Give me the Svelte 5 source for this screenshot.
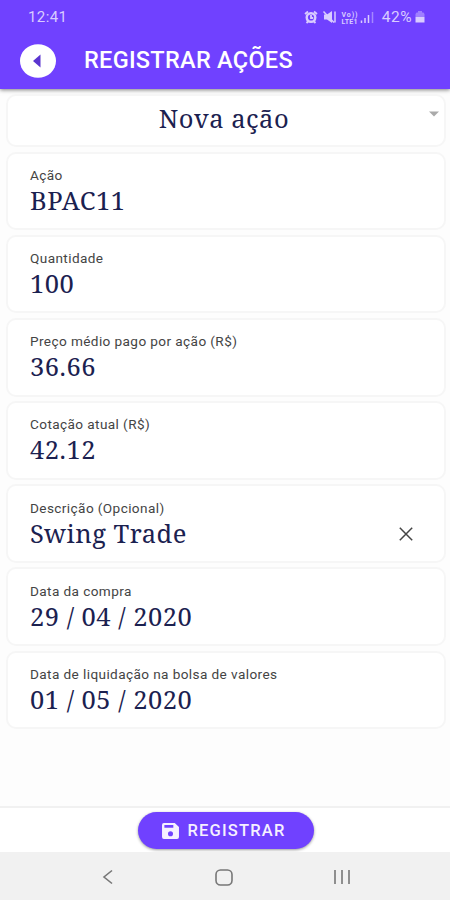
<script>
    let acao = "BPAC11";
    let quantidade = "100";
    let precoMedio = "36.66";
    let cotacao = "42.12";
    let descricao = "Swing Trade";
    let dataCompra = "29 / 04 / 2020";
    let dataLiquidacao = "01 / 05 / 2020";

    function limparDescricao() {
        descricao = "";
    }

    $: campos = [
        { label: "Ação", valor: acao },
        { label: "Quantidade", valor: quantidade },
        { label: "Preço médio pago por ação (R$)", valor: precoMedio },
        { label: "Cotação atual (R$)", valor: cotacao },
        { label: "Descrição (Opcional)", valor: descricao, limpar: limparDescricao },
        { label: "Data da compra", valor: dataCompra },
        { label: "Data de liquidação na bolsa de valores", valor: dataLiquidacao }
    ];
</script>

<div class="screen">
    <header>
        <div class="status">
            <span class="clock">12:41</span>
            <svg class="status-icons" width="70" height="14" viewBox="0 0 70 14">
                <!-- alarme -->
                <circle cx="7" cy="7.500" r="4.300" fill="none" stroke="currentColor" stroke-width="2.400" />
                <path d="M1 4 4 1.500M10 1.500 13 4M2.500 13l2-2M11.500 13l-2-2M7 5v3h2.200" fill="none" stroke="currentColor" stroke-width="1.800" />
                <!-- som desligado -->
                <path d="M20 4.500h3L28 1v12L23 9.500h-3z" fill="currentColor" />
                <path d="M19.500 1.500 30 12.500M31 1.500v11" fill="none" stroke="currentColor" stroke-width="1.500" />
                <!-- sinal -->
                <text x="37.500" y="6.500" textLength="16">Vo))</text>
                <text x="37.500" y="13.500" textLength="16">LTE1</text>
                <path d="M57.500 10.500V13M61 8v5M64.500 5V13" stroke="currentColor" stroke-width="1.500" />
                <path d="M68.500 2V13" stroke="currentColor" stroke-width="1.500" opacity=".5" />
            </svg>
            <span class="percent">42%</span>
            <svg class="battery" width="10" height="12" viewBox="0 0 10 12">
                <path d="M3 0h4v1.500h1.500L9.500 3v3h-9V3l1-1.500H3z" fill="currentColor" opacity=".45" />
                <path d="M.5 6h9v5.500h-9z" fill="currentColor" />
            </svg>
        </div>
        <div class="toolbar">
            <button class="back" aria-label="Voltar">
                <svg width="36" height="34" viewBox="0 0 36 34">
                    <ellipse cx="18" cy="17" rx="18" ry="16.800" fill="#fff" />
                    <path d="M13 17 20.500 10.500v13z" fill="#5b35d0" />
                </svg>
            </button>
            <h1>REGISTRAR AÇÕES</h1>
        </div>
    </header>

    <main>
        <div class="card select">
            <span>Nova ação</span>
            <svg class="caret" width="10" height="6" viewBox="0 0 10 6">
                <path d="M0 .5h10L5 5.500z" fill="#aaa" />
            </svg>
        </div>
        {#each campos as campo}
            <div class="card field">
                <div class="text">
                    <div class="label">{campo.label}</div>
                    <div class="value">{campo.valor}</div>
                </div>
                {#if campo.limpar}
                    <button class="clear" aria-label="Limpar" on:click={campo.limpar}>
                        <svg width="14" height="14" viewBox="0 0 14 14">
                            <path d="M.8.8 13.200 13.200M13.200.8.8 13.200" stroke="#444" stroke-width="1.500" />
                        </svg>
                    </button>
                {/if}
            </div>
        {/each}
    </main>

    <footer>
        <button class="submit">
            <svg width="17" height="16" viewBox="0 0 18 17">
                <path fill-rule="evenodd" fill="currentColor" d="M2 0h11.500L18 4.200V15a2 2 0 0 1-2 2H2a2 2 0 0 1-2-2V2a2 2 0 0 1 2-2zM2.500 2v3h9.500V2zM9 8.800a2.700 2.700 0 1 0 0 5.400 2.700 2.700 0 0 0 0-5.400z" />
            </svg>
            <span>REGISTRAR</span>
        </button>
    </footer>

    <nav>
        <svg width="12" height="16" viewBox="0 0 12 16">
            <path d="M10 1.500 2 8l8 6.500" />
        </svg>
        <svg width="18" height="17" viewBox="0 0 18 17">
            <rect x="1" y="1" width="16" height="15" rx="4.500" />
        </svg>
        <svg width="18" height="16" viewBox="0 0 18 16">
            <path d="M2 1v14M9 1v14M16 1v14" />
        </svg>
    </nav>
</div>

<style>
    :global(body) {
        margin: 0;
        background: #fdfdfd;
    }

    .screen {
        display: flex;
        flex-direction: column;
        width: 450px;
        height: 900px;
        overflow: hidden;
        background: #fdfdfd;
        font-family: Roboto, sans-serif;
    }

    button {
        padding: 0;
        border: none;
        background: none;
        font-family: inherit;
        cursor: pointer;
    }

    svg {
        display: block;
    }

    header {
        flex: none;
        height: 89px;
        background: #7041ff;
        box-shadow: 0 1px 4px rgba(0, 0, 0, 0.5);
        color: #fff;
    }

    .status {
        display: flex;
        align-items: center;
        height: 34px;
        padding: 0 25px 0 28px;
        color: #d9ccff;
        font-size: 15px;
        letter-spacing: 0.4px;
    }

    .status-icons {
        margin-left: auto;
    }

    .status-icons text {
        font-size: 7px;
        font-weight: 700;
        letter-spacing: 0;
        fill: currentColor;
    }

    .percent {
        margin: 0 3px 0 8px;
        font-size: 15.5px;
        letter-spacing: 0.5px;
    }

    .toolbar {
        display: flex;
        align-items: center;
        height: 53px;
        padding-left: 20px;
    }

    h1 {
        margin: -1px 0 0 28px;
        font-size: 23.5px;
        font-weight: 500;
        letter-spacing: 0.28px;
        line-height: 30px;
    }

    main {
        display: flex;
        flex: 1;
        flex-direction: column;
        gap: 4.5px;
        padding: 5px 4px 0 6px;
    }

    .card {
        box-sizing: border-box;
        display: flex;
        border: 2px solid #f6f6f6;
        border-radius: 10px;
        background: #fff;
        color: #1b2150;
        font-family: "Noto Serif", "DejaVu Serif Condensed", "DejaVu Serif", serif;
        font-size: 25.5px;
        letter-spacing: 0.5px;
    }

    .select {
        position: relative;
        justify-content: center;
        height: 53px;
        padding-right: 4px;
        line-height: 44px;
    }

    .caret {
        position: absolute;
        top: 15px;
        right: 5px;
    }

    .field {
        justify-content: space-between;
        height: 78.7px;
        padding: 12.4px 31.5px 0 22px;
    }

    .label {
        color: #444;
        font-family: Roboto, sans-serif;
        font-size: 13.6px;
        line-height: 18px;
        letter-spacing: 0.4px;
    }

    .value {
        line-height: 32px;
        white-space: nowrap;
    }

    .clear {
        align-self: flex-start;
        margin-top: 28px;
    }

    footer {
        box-sizing: border-box;
        display: flex;
        flex: none;
        justify-content: center;
        height: 46px;
        padding: 4px 0 0 2px;
        border-top: 2px solid #f1f1f1;
        background: #fff;
    }

    .submit {
        display: flex;
        align-items: center;
        justify-content: center;
        gap: 8px;
        width: 176px;
        height: 37px;
        padding-right: 4px;
        border-radius: 19px;
        background: #7041ff;
        box-shadow: 0 1px 3px rgba(0, 0, 0, 0.4);
        color: #f5f0ff;
        font-size: 16.5px;
        font-weight: 500;
        letter-spacing: 1.2px;
    }

    .submit span {
        margin-top: -1px;
    }

    nav {
        box-sizing: border-box;
        display: flex;
        flex: none;
        align-items: center;
        justify-content: space-between;
        height: 48px;
        padding: 2px 99px 0 102px;
        background: #f1f1f1;
        fill: none;
        stroke: #777;
        stroke-width: 1.6;
    }
</style>
